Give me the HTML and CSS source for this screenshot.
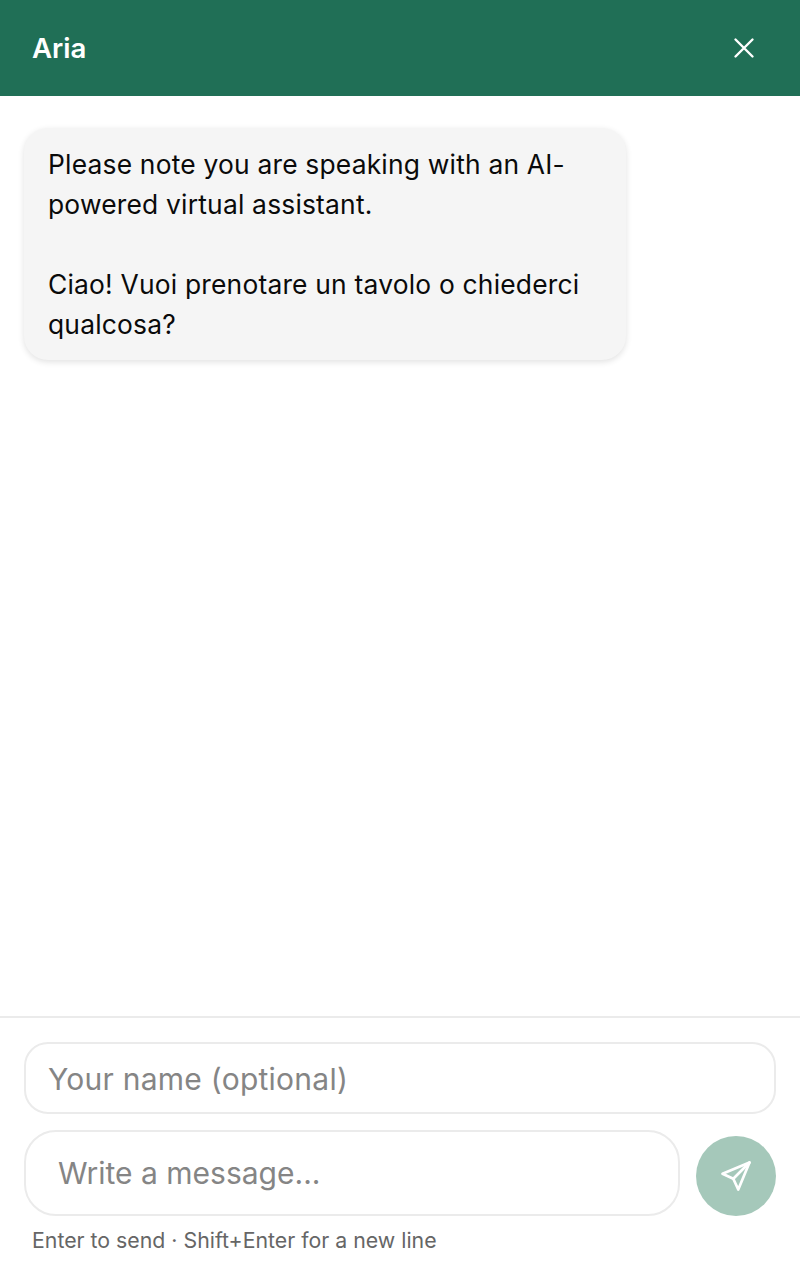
FILE: index.html
```html
<!DOCTYPE html>
<html lang="en">
<head>
    <meta charset="UTF-8">
    <meta name="viewport" content="width=device-width, initial-scale=1.0">
    <title>Aria</title>
    <link rel="stylesheet" href="styles.css">
</head>
<body>
    <div class="chat">
        <header class="chat-header">
            <h1>Aria</h1>
            <button class="close-btn" aria-label="Close">
                <svg width="32" height="32" viewBox="0 0 32 32" fill="none" stroke="currentColor" stroke-width="2.4" stroke-linecap="round">
                    <path d="M7.5 7.5l17 17M24.500 7.5l-17 17"/>
                </svg>
            </button>
        </header>

        <main class="messages">
            <div class="bubble">Please note you are speaking with an AI-powered virtual assistant.<br><br>Ciao! Vuoi prenotare un tavolo o chiederci qualcosa?</div>
        </main>

        <footer class="composer">
            <input class="name-input" type="text" placeholder="Your name (optional)">
            <div class="message-row">
                <textarea class="message-input" rows="1" placeholder="Write a message..."></textarea>
                <button class="send-btn" aria-label="Send">
                    <svg width="36" height="36" viewBox="0 0 24 24" fill="none" stroke="currentColor" stroke-width="1.8" stroke-linecap="round" stroke-linejoin="round">
                        <path d="M21 3L3 10.5l7.2 3.3L13.5 21z"/>
                        <path d="M21 3L10.2 13.8"/>
                    </svg>
                </button>
            </div>
            <p class="hint">Enter to send · Shift+Enter for a new line</p>
        </footer>
    </div>
</body>
</html>
```

FILE: styles.css
```css
* {
    box-sizing: border-box;
}
body {
    margin: 0;
    padding: 0;
    background-color: white;
    font-family: Inter, "Noto Sans", sans-serif;
    color: #0a0a0a;
}
.chat {
    display: flex;
    flex-direction: column;
    height: 1280px;
}
.chat-header {
    height: 96px;
    flex-shrink: 0;
    display: flex;
    align-items: center;
    justify-content: space-between;
    padding: 0 40px 0 32px;
    background-color: #206f56;
    color: white;
}
h1 {
    margin: 0;
    font-size: 27.6px;
    font-weight: 600;
}
.close-btn {
    display: flex;
    padding: 0;
    border: none;
    background: none;
    color: white;
}
.messages {
    flex: 1;
    padding: 32px 24px;
}
.bubble {
    width: 602px;
    padding: 16px 24px;
    background-color: #f5f5f5;
    border-radius: 24px;
    box-shadow: 0 2px 6px rgba(0, 0, 0, 0.12);
    font-size: 26.4px;
    letter-spacing: 0.2px;
    line-height: 40px;
}
.composer {
    flex-shrink: 0;
    height: 264px;
    padding: 24px 24px 0;
    border-top: 2px solid #ebebeb;
}
input, textarea {
    display: block;
    font-family: inherit;
    background: white;
    border: 2px solid #ebebeb;
    outline: none;
    resize: none;
    color: #0a0a0a;
}
input::placeholder, textarea::placeholder {
    color: #858585;
    opacity: 1;
}
.name-input {
    width: 100%;
    height: 72px;
    padding: 2px 22px 0;
    border-radius: 24px;
    font-size: 30px;
    letter-spacing: 0.25px;
}
.message-row {
    display: flex;
    align-items: flex-end;
    gap: 16px;
    margin-top: 16px;
}
.message-input {
    flex: 1;
    height: 86px;
    padding: 20px 32px;
    border-radius: 32px;
    font-size: 30px;
    line-height: 42px;
}
.send-btn {
    width: 80px;
    height: 80px;
    flex-shrink: 0;
    display: flex;
    align-items: center;
    justify-content: center;
    padding: 0;
    border: none;
    border-radius: 50%;
    background-color: #a5c8ba;
    color: white;
}
.hint {
    margin: 10px 0 0;
    padding-left: 8px;
    font-size: 21.3px;
    line-height: 28px;
    color: #666;
}
```
